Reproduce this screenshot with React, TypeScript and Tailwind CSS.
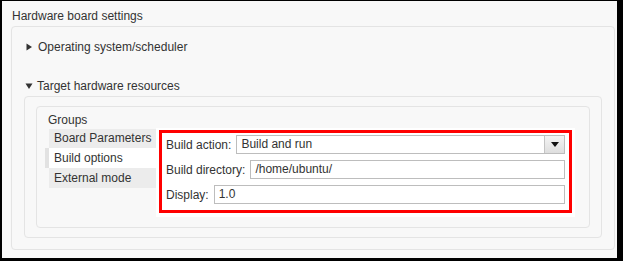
import React from 'react';

const font = { fontFamily: '"Liberation Sans", Arial, sans-serif' };

function Caret({ open }: { open?: boolean }) {
  return (
    <svg width="8" height="8" viewBox="0 0 8 8" className="shrink-0">
      {open ? <path d="M0.5 1.5h7L4 7z" fill="#333" /> : <path d="M1.5 0.5v7L7 4z" fill="#333" />}
    </svg>
  );
}

function Field({ label, value, select }: { label: string; value: string; select?: boolean }) {
  return (
    <div className="flex items-center gap-[5px] h-[19px]">
      <span className="whitespace-nowrap">{label}</span>
      <div className="flex-1 flex h-[19px] border border-[#bdbdbd] bg-white">
        <div className="flex-1 px-[4px] leading-[17px]">{value}</div>
        {select && (
          <div className="w-[20px] flex items-center justify-center border-l border-[#c4c4c4] bg-gradient-to-b from-[#f4f4f4] to-[#dedede]">
            <svg width="8" height="5" viewBox="0 0 8 5">
              <path d="M0 0h8L4 5z" fill="#111" />
            </svg>
          </div>
        )}
      </div>
    </div>
  );
}

export default function App() {
  return (
    <div className="w-[623px] h-[261px] bg-black pt-px pl-[2px] pr-[6px] pb-[3px]" style={font}>
      <div className="h-full bg-[#f8f8f8] text-[12px] text-[#333] pl-[9px] pr-[2px] flex flex-col">
        <div className="h-[25px] flex items-center pl-px pt-[5px]">Hardware board settings</div>
        <div className="border border-[#e4e4e4] rounded-[4px] h-[224px] px-[13px] flex flex-col">
          <div className="h-[38px] flex items-center gap-[5px] pt-px">
            <Caret />
            <span>Operating system/scheduler</span>
          </div>
          <div className="h-[11px]" />
          <div className="h-[20px] flex items-center gap-[4px]">
            <Caret open />
            <span>Target hardware resources</span>
          </div>
          <div className="border border-[#e4e4e4] rounded-[4px] h-[142px] -mx-px px-[11px] pt-[9px]">
            <div className="border border-[#e4e4e4] rounded-[4px] h-[122px] px-[8px] pt-[5px]">
              <div className="pl-[3px] h-[16px] leading-[16px]">Groups</div>
              <div className="flex">
                <div className="w-[111px] flex flex-col pt-px pl-[4px]">
                  <div className="h-[19px] bg-[#ececec] pl-[5px] leading-[19px]">Board Parameters</div>
                  <div className="h-[20px] flex -ml-[4px]">
                    <div className="w-[4px] bg-[#e2e2e2]" />
                    <div className="flex-1 bg-white pl-[5px] leading-[20px]">Build options</div>
                  </div>
                  <div className="h-[20px] bg-[#ececec] pl-[5px] leading-[20px]">External mode</div>
                </div>
                <div className="w-[419px] h-[89px] bg-white pt-[2px] px-[3px]">
                  <div className="border-[3px] border-[#ff0000] h-[83px] px-[4px] pt-[2px] flex flex-col gap-[6px]">
                    <Field label="Build action:" value="Build and run" select />
                    <Field label="Build directory:" value="/home/ubuntu/" />
                    <Field label="Display:" value="1.0" />
                  </div>
                </div>
              </div>
            </div>
          </div>
        </div>
      </div>
    </div>
  );
}
